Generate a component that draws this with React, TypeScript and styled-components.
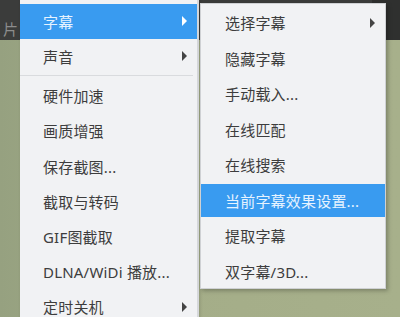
import styled, { createGlobalStyle } from "styled-components";

const GlobalStyle = createGlobalStyle`
  body {
    margin: 0;
    font-family: "Noto Sans", "Noto Sans CJK SC", sans-serif;
  }
`;

type Item = { label: string; sub?: boolean; active?: boolean; sep?: boolean };

const mainItems: Item[] = [
  { label: "字幕", sub: true, active: true },
  { label: "声音", sub: true, sep: true },
  { label: "硬件加速" },
  { label: "画质增强" },
  { label: "保存截图..." },
  { label: "截取与转码" },
  { label: "GIF图截取" },
  { label: "DLNA/WiDi 播放..." },
  { label: "定时关机", sub: true },
];

const subItems: Item[] = [
  { label: "选择字幕", sub: true },
  { label: "隐藏字幕" },
  { label: "手动载入..." },
  { label: "在线匹配" },
  { label: "在线搜索" },
  { label: "当前字幕效果设置...", active: true },
  { label: "提取字幕" },
  { label: "双字幕/3D..." },
];

export default function App() {
  return (
    <>
      <GlobalStyle />
      <Stage>
        <TopBar>
          <Title>片</Title>
          <Knob />
        </TopBar>
        <Video />

        <MainMenu>
          {mainItems.map((it) => (
            <div key={it.label}>
              <Row $active={it.active} $h={it.active ? 34.5 : 35.2} $pad={23}>
                <span>{it.label}</span>
                {it.sub && <Arrow $active={it.active} />}
              </Row>
              {it.sep && <Separator />}
            </div>
          ))}
        </MainMenu>

        <SubMenu>
          {subItems.map((it) => (
            <Row key={it.label} $active={it.active} $h={35.5} $pad={24} $inset={it.active ? 1.5 : 0}>
              <span>{it.label}</span>
              {it.sub && <Arrow $active={it.active} />}
            </Row>
          ))}
        </SubMenu>
      </Stage>
    </>
  );
}

const Stage = styled.div`
  position: relative;
  width: 400px;
  height: 317px;
  overflow: hidden;
  display: flex;
  flex-direction: column;
  background: #a3ac87;
`;

const TopBar = styled.div`
  height: 40px;
  display: flex;
  justify-content: space-between;
  align-items: flex-start;
  background: #3b3c3b;
`;

const Title = styled.span`
  padding: 21px 0 0 3px;
  font-size: 15px;
  line-height: 17px;
  color: #8c8c8c;
`;

const Knob = styled.div`
  width: 40px;
  height: 52px;
  margin-right: -12px;
  border-bottom-left-radius: 14px;
  background: #2f302f;
`;

const Video = styled.div`
  flex: 1;
  background: linear-gradient(90deg, #96a180 0%, #a4ad88 40%, #a7b08b 100%);
`;

const MainMenu = styled.div`
  position: absolute;
  left: 20px;
  top: -4px;
  width: 177px;
  padding-top: 8px;
  height: 340px;
  background: #f1f2f4;
  border-right: 2px solid #d6d8db;
  box-shadow: 1px 0 3px rgba(0, 0, 0, 0.15);
`;

const SubMenu = styled.div`
  position: absolute;
  left: 200px;
  top: 3px;
  width: 184px;
  padding-top: 1px;
  height: 283px;
  background: #f1f2f4;
  border: 1px solid #cfd1d4;
  box-shadow: 2px 2px 4px rgba(0, 0, 0, 0.25);
`;

const Row = styled.div<{ $active?: boolean; $h: number; $pad: number; $inset?: number }>`
  display: flex;
  align-items: center;
  justify-content: space-between;
  height: ${(p) => p.$h - (p.$inset ?? 0) * 2}px;
  margin: ${(p) => p.$inset ?? 0}px 0;
  padding: 0 10px 0 ${(p) => p.$pad}px;
  font-size: 15px;
  letter-spacing: 0.2px;
  color: ${(p) => (p.$active ? "#e6f3ff" : "#3d3d3d")};
  background: ${(p) => (p.$active ? "#399bf0" : "transparent")};
  white-space: nowrap;
`;

const Arrow = styled.i<{ $active?: boolean }>`
  width: 0;
  height: 0;
  border-top: 5px solid transparent;
  border-bottom: 5px solid transparent;
  border-left: 5px solid ${(p) => (p.$active ? "#ffffff" : "#444")};
`;

const Separator = styled.div`
  height: 1px;
  margin: 1.5px 4px 2px 0;
  background: #d9dbde;
`;
